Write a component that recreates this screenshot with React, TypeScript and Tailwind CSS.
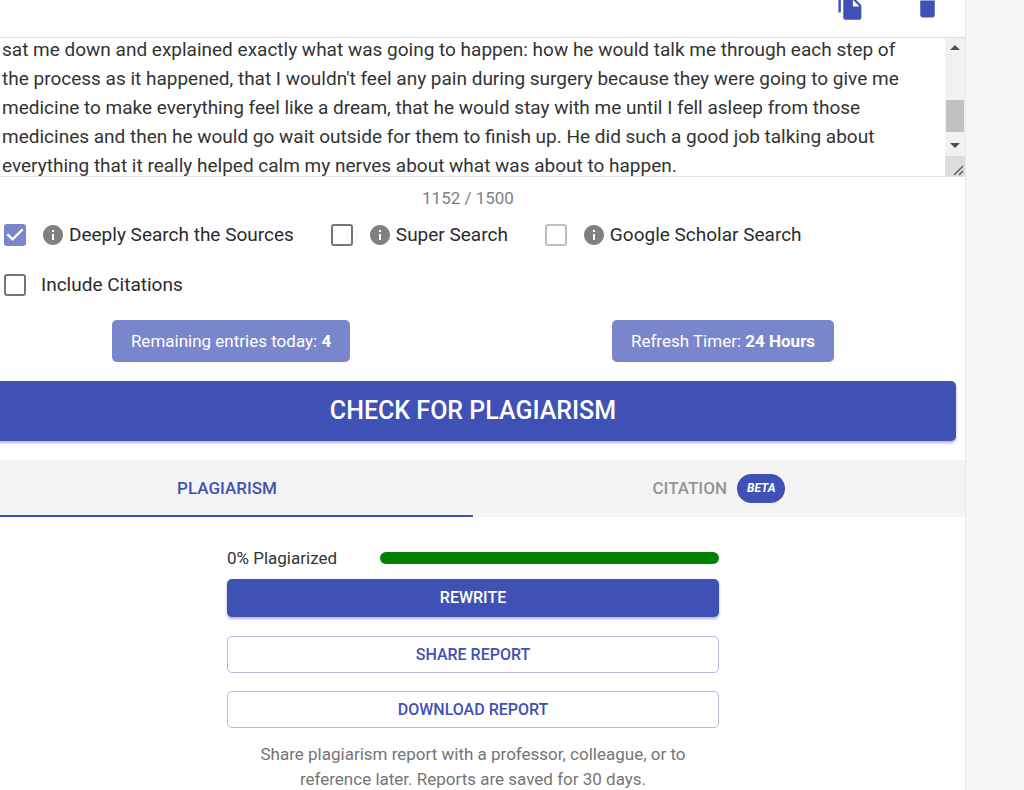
import { useState } from "react";
import { MdDelete, MdFileCopy, MdInfo } from "react-icons/md";

type Option = {
  id: string;
  label: string;
  info: boolean;
  checked: boolean;
  disabled?: boolean;
};

type Tab = "plagiarism" | "citation";

const initialText =
  "sat me down and explained exactly what was going to happen: how he would talk me through each step of the process as it happened, that I wouldn't feel any pain during surgery because they were going to give me medicine to make everything feel like a dream, that he would stay with me until I fell asleep from those medicines and then he would go wait outside for them to finish up. He did such a good job talking about everything that it really helped calm my nerves about what was about to happen.";

const initialOptions: Option[] = [
  { id: "deep", label: "Deeply Search the Sources", info: true, checked: true },
  { id: "super", label: "Super Search", info: true, checked: false },
  { id: "scholar", label: "Google Scholar Search", info: true, checked: false, disabled: true },
  { id: "citations", label: "Include Citations", info: false, checked: false },
];

function Checkbox({ option, onToggle }: { option: Option; onToggle: () => void }) {
  return (
    <label htmlFor={option.id} className="flex h-[50px] items-center text-[#2b2b2b]">
      <span className="mr-[15px] grid">
        <input
          id={option.id}
          type="checkbox"
          checked={option.checked}
          disabled={option.disabled}
          onChange={onToggle}
          className="col-start-1 row-start-1 size-[22px] appearance-none rounded-[3px] border-2 border-[#757575] bg-white checked:border-[#7986cb] checked:bg-[#7986cb] disabled:border-[#bdbdbd]"
        />
        {option.checked && (
          <svg viewBox="3 3 18 18" className="pointer-events-none col-start-1 row-start-1 size-[22px]" fill="white">
            <path d="M10 17l-5-5 1.41-1.41L10 14.17l7.59-7.59L19 8l-9 9z" />
          </svg>
        )}
      </span>
      {option.info && <MdInfo className="mr-1 size-6 text-[#808080]" />}
      {option.label}
    </label>
  );
}

// Classic desktop scrollbar beside the text box
function Scrollbar() {
  return (
    <div className="flex w-5 shrink-0 flex-col bg-[#f1f1f1]" aria-hidden="true">
      <svg viewBox="0 0 20 20" className="size-5" fill="#505050">
        <path d="M5 12l5-5 5 5z" />
      </svg>
      <div className="flex flex-1 flex-col justify-end px-px">
        <div className="h-8 bg-[#c1c1c1]" />
      </div>
      <svg viewBox="0 0 20 24" className="h-6 w-5" fill="#505050">
        <path d="M5 11l5 5 5-5z" />
      </svg>
      <svg viewBox="0 0 20 20" className="size-5 bg-[#dcdcdc]" stroke="#505050" strokeWidth="1.3">
        <path d="M9 19l9-9M14 19l4-4" />
      </svg>
    </div>
  );
}

export default function App() {
  const [text, setText] = useState(initialText);
  const [options, setOptions] = useState(initialOptions);
  const [tab, setTab] = useState<Tab>("plagiarism");

  const toggle = (id: string) =>
    setOptions(options.map((o) => (o.id === id ? { ...o, checked: !o.checked } : o)));

  return (
    <div className="h-screen overflow-hidden bg-[#f7f5f6] font-[Roboto,sans-serif] text-[19px] text-[#333333]">
      <main className="mr-[58px] -ml-[19px] min-h-screen border-r border-[#e8e6e7] bg-white">
        <div className="-mt-2 flex h-[45px] items-start justify-end gap-12 pr-[23px] text-[#3f51b5]">
          <button aria-label="Copy text" onClick={() => navigator.clipboard?.writeText(text)}>
            <MdFileCopy className="size-[29px]" />
          </button>
          <button aria-label="Clear text" onClick={() => setText("")}>
            <MdDelete className="size-[29px]" />
          </button>
        </div>

        <div className="flex h-[140px] overflow-hidden border-y border-[#e0e0e0]">
          <textarea
            aria-label="Text to check"
            value={text}
            onChange={(e) => setText(e.target.value)}
            className="-mt-[3px] min-w-0 flex-1 resize-none overflow-hidden pr-6 pl-[21px] leading-[29px] outline-none"
          />
          <Scrollbar />
        </div>

        <p className="pt-[9px] pr-[10px] text-center text-[17px] leading-6 text-[#808080]">1152 / 1500</p>

        <div className="flex flex-wrap gap-x-[37px] pr-20 pl-[23px]">
          {options.map((o) => (
            <Checkbox key={o.id} option={o} onToggle={() => toggle(o.id)} />
          ))}
        </div>

        <div className="mt-[10px] flex justify-around text-[17px] text-white">
          <div className="rounded-[5px] bg-[#7986cb] px-[19px] py-2 leading-[26px]">
            Remaining entries today: <b>4</b>
          </div>
          <div className="rounded-[5px] bg-[#7986cb] px-[19px] py-2 leading-[26px]">
            Refresh Timer: <b>24 Hours</b>
          </div>
        </div>

        <div className="px-[9px] pt-[19px]">
          <button className="h-[60px] w-full rounded-[5px] bg-[#3f51b5] text-[25px] font-medium text-white uppercase shadow-[0_2px_3px_rgba(0,0,0,0.3)]">
            Check for plagiarism
          </button>
        </div>

        <div role="tablist" className="mt-[19px] flex h-[57px] bg-[#f4f4f4] text-[17px] font-medium">
          <button
            role="tab"
            aria-selected={tab === "plagiarism"}
            onClick={() => setTab("plagiarism")}
            className="flex-1 border-b-2 border-transparent pt-0.5 text-[#949494] uppercase aria-selected:border-[#3f51b5] aria-selected:text-[#3f51b5]"
          >
            Plagiarism
          </button>
          <button
            role="tab"
            aria-selected={tab === "citation"}
            onClick={() => setTab("citation")}
            className="flex flex-1 items-center justify-center gap-[10px] border-b-2 border-transparent pt-0.5 text-[#949494] uppercase aria-selected:border-[#3f51b5] aria-selected:text-[#3f51b5]"
          >
            Citation
            <span className="rounded-full bg-[#3f51b5] px-[10px] text-[12px] leading-[29px] font-bold text-white italic">
              Beta
            </span>
          </button>
        </div>

        <div className="mx-auto w-1/2 pt-7 text-[17px]">
          <div className="flex items-center leading-[26px]">
            <span className="w-[31%]">0% Plagiarized</span>
            <div className="h-3 flex-1 rounded-full bg-[#008000]" />
          </div>
          <button className="mt-2 h-[38px] w-full rounded-[5px] bg-[#3f51b5] text-base font-medium text-white uppercase shadow-[0_2px_3px_rgba(0,0,0,0.3)]">
            Rewrite
          </button>
          <button className="mt-[19px] h-[37px] w-full rounded-[5px] border border-[#b4b9d6] text-base font-medium text-[#3f51b5] uppercase">
            Share report
          </button>
          <button className="mt-[18px] h-[37px] w-full rounded-[5px] border border-[#b4b9d6] text-base font-medium text-[#3f51b5] uppercase">
            Download report
          </button>
          <p className="mt-[14px] px-6 text-center leading-[25px] text-[#757575]">
            Share plagiarism report with a professor, colleague, or to reference later. Reports are saved for 30 days.
          </p>
        </div>
      </main>
    </div>
  );
}
